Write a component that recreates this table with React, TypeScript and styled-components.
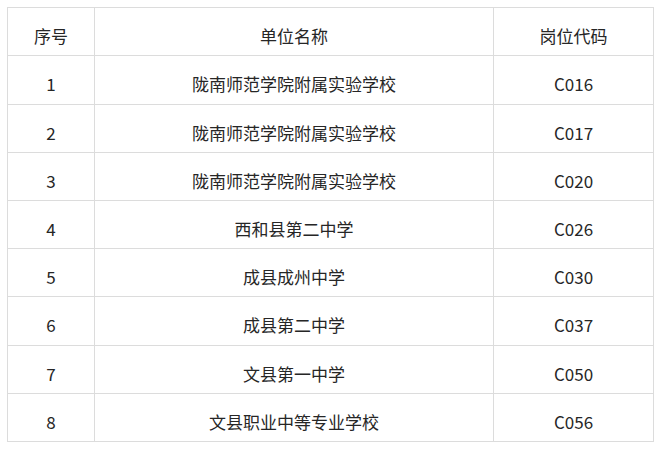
import styled, { createGlobalStyle } from "styled-components";

const GlobalStyle = createGlobalStyle`
  body {
    margin: 0;
    background: #fff;
    font-family: "Noto Sans CJK SC", "Noto Sans", sans-serif;
  }
`;

const rows = [
  { no: "1", name: "陇南师范学院附属实验学校", code: "C016" },
  { no: "2", name: "陇南师范学院附属实验学校", code: "C017" },
  { no: "3", name: "陇南师范学院附属实验学校", code: "C020" },
  { no: "4", name: "西和县第二中学", code: "C026" },
  { no: "5", name: "成县成州中学", code: "C030" },
  { no: "6", name: "成县第二中学", code: "C037" },
  { no: "7", name: "文县第一中学", code: "C050" },
  { no: "8", name: "文县职业中等专业学校", code: "C056" },
];

export default function App() {
  return (
    <>
      <GlobalStyle />
      <Page>
        <Table>
          <colgroup>
            <col style={{ width: 87 }} />
            <col style={{ width: 399 }} />
            <col style={{ width: 160 }} />
          </colgroup>
          <thead>
            <Row>
              <Cell as="th">序号</Cell>
              <Cell as="th">单位名称</Cell>
              <Cell as="th">岗位代码</Cell>
            </Row>
          </thead>
          <tbody>
            {rows.map((r, i) => (
              <Row key={r.no} $tall={i === 0 || i === 5}>
                <Cell>{r.no}</Cell>
                <Cell>{r.name}</Cell>
                <Cell>{r.code}</Cell>
              </Row>
            ))}
          </tbody>
        </Table>
      </Page>
    </>
  );
}

const Page = styled.div`
  padding: 7px 0 0 7px;
`;

const Table = styled.table`
  border-collapse: collapse;
  table-layout: fixed;
  width: 647px;
  color: #262626;
`;

const Row = styled.tr<{ $tall?: boolean }>`
  height: ${(p) => (p.$tall ? 49 : 48)}px;
`;

const Cell = styled.td`
  box-sizing: border-box;
  border: 1px solid #dcdcdc;
  padding: 8px 6px 0;
  text-align: center;
  vertical-align: middle;
  font-size: 17px;
  font-weight: normal;
  line-height: 24px;
`;
